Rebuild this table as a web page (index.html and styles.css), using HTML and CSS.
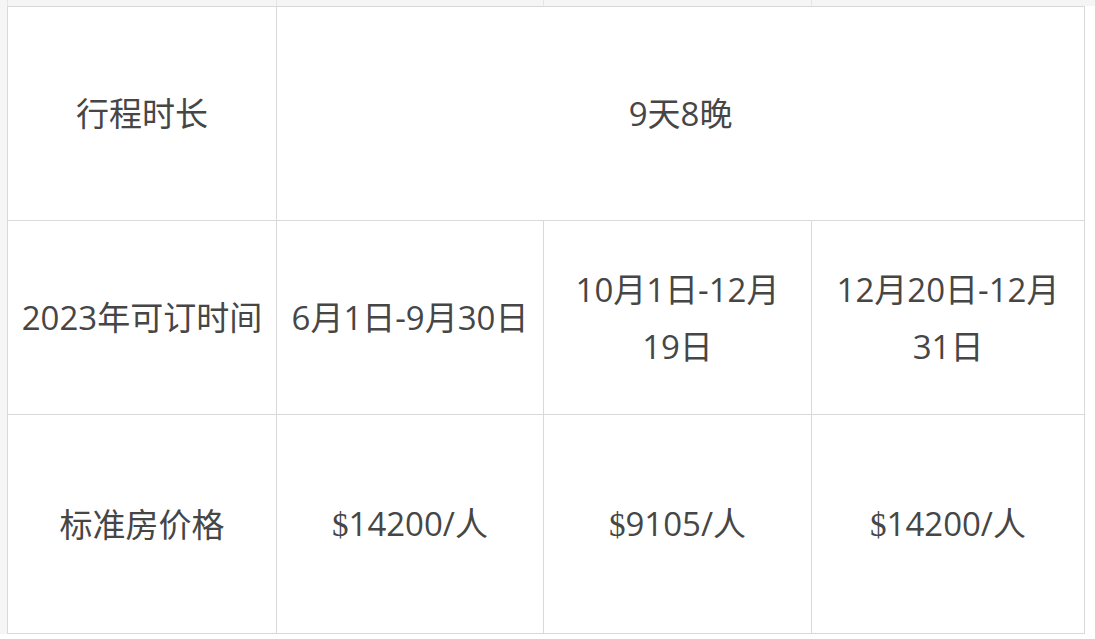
FILE: index.html
```html
<!DOCTYPE html>
<html lang="zh-CN">
<head>
<meta charset="utf-8">
<title>价格表</title>
<link rel="stylesheet" href="styles.css">
</head>
<body>
<div class="top-strip">
  <div class="ts-cell ts-pad"></div>
  <div class="ts-cell ts-c1"></div>
  <div class="ts-cell ts-c2"></div>
  <div class="ts-cell ts-c3"></div>
  <div class="ts-cell ts-c4"></div>
</div>
<div class="main">
  <div class="side"></div>
  <table class="price-table">
    <colgroup>
      <col class="c1"><col class="c2"><col class="c3"><col class="c4">
    </colgroup>
    <tbody>
      <tr class="r1">
        <td>行程时长</td>
        <td colspan="3">9天8晚</td>
      </tr>
      <tr class="r2">
        <td>2023年可订时间</td>
        <td>6月1日-9月30日</td>
        <td>10月1日-12月<br>19日</td>
        <td>12月20日-12月<br>31日</td>
      </tr>
      <tr class="r3">
        <td>标准房价格</td>
        <td><span class="dollar">$</span>14200/人</td>
        <td><span class="dollar">$</span>9105/人</td>
        <td><span class="dollar">$</span>14200/人</td>
      </tr>
    </tbody>
  </table>
</div>
</body>
</html>
```
FILE: styles.css
```css
html, body {
  margin: 0;
  padding: 0;
  background: #ffffff;
}
body {
  font-family: "Open Sans", "Noto Sans CJK SC", sans-serif;
  color: #464646;
}
.top-strip {
  display: flex;
  height: 6px;
  background: #f5f5f5;
}
.ts-cell {
  box-sizing: border-box;
  height: 6px;
  border-left: 1px solid #e6e6e6;
}
.ts-pad { width: 7px; border-left: none; }
.ts-c1 { width: 269px; }
.ts-c2 { width: 267px; }
.ts-c3 { width: 268px; }
.ts-c4 { width: 273px; }
.main {
  display: flex;
  align-items: flex-start;
}
.side {
  width: 7px;
  align-self: stretch;
  background: #f5f5f5;
}
.price-table {
  border-collapse: collapse;
  table-layout: fixed;
  width: 1077px;
}
.c1 { width: 269px; }
.c2 { width: 267px; }
.c3 { width: 268px; }
.c4 { width: 273px; }
.price-table td {
  border: 1px solid #d9d9d9;
  text-align: center;
  vertical-align: middle;
  font-size: 33px;
  line-height: 57px;
  padding: 0;
}
.r1 td { height: 213px; }
.r2 td { height: 193px; }
.r3 td { height: 218px; }
.dollar {
  font-family: "Liberation Serif", serif;
}
```
